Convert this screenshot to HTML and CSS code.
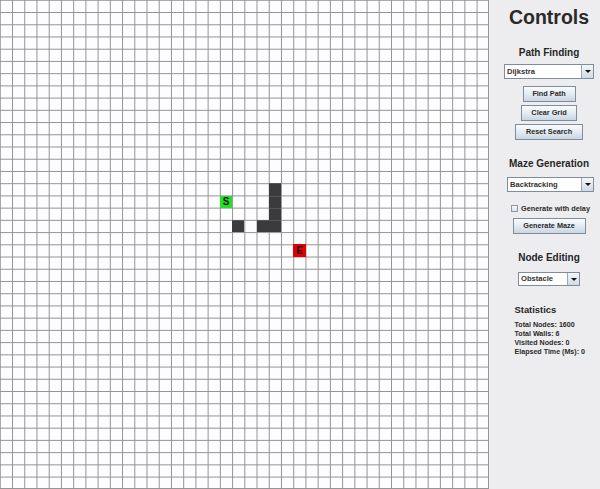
FILE: index.html
```html
<!DOCTYPE html>
<html>
<head>
<meta charset="utf-8">
<link rel="stylesheet" href="styles.css">
</head>
<body>
<div class="app">
  <div class="grid">
    <svg class="grid-lines" viewBox="0 0 800 800" preserveAspectRatio="none" xmlns="http://www.w3.org/2000/svg">
      <path class="lines" d="M0 .5H800M0 20.5H800M0 40.5H800M0 60.5H800M0 80.5H800M0 100.5H800M0 120.5H800M0 140.5H800M0 160.5H800M0 180.5H800M0 200.5H800M0 220.5H800M0 240.5H800M0 260.5H800M0 280.5H800M0 300.5H800M0 320.5H800M0 340.5H800M0 360.5H800M0 380.5H800M0 400.5H800M0 420.5H800M0 440.5H800M0 460.5H800M0 480.5H800M0 500.5H800M0 520.5H800M0 540.5H800M0 560.5H800M0 580.5H800M0 600.5H800M0 620.5H800M0 640.5H800M0 660.5H800M0 680.5H800M0 700.5H800M0 720.5H800M0 740.5H800M0 760.5H800M0 780.5H800M0 799.2H800M.5 0V800M20.5 0V800M40.5 0V800M60.5 0V800M80.5 0V800M100.5 0V800M120.5 0V800M140.5 0V800M160.5 0V800M180.5 0V800M200.5 0V800M220.5 0V800M240.5 0V800M260.5 0V800M280.5 0V800M300.5 0V800M320.5 0V800M340.5 0V800M360.5 0V800M380.5 0V800M400.5 0V800M420.5 0V800M440.5 0V800M460.5 0V800M480.5 0V800M500.5 0V800M520.5 0V800M540.5 0V800M560.5 0V800M580.5 0V800M600.5 0V800M620.5 0V800M640.5 0V800M660.5 0V800M680.5 0V800M700.5 0V800M720.5 0V800M740.5 0V800M760.5 0V800M780.5 0V800M799.2 0V800"/>
    </svg>
    <div class="cell start" style="grid-area: 17 / 19">S</div>
    <div class="cell end" style="grid-area: 21 / 25">E</div>
    <div class="cell wall" style="grid-area: 16 / 23"></div>
    <div class="cell wall" style="grid-area: 17 / 23"></div>
    <div class="cell wall" style="grid-area: 18 / 23"></div>
    <div class="cell wall" style="grid-area: 19 / 23"></div>
    <div class="cell wall" style="grid-area: 19 / 20"></div>
    <div class="cell wall" style="grid-area: 19 / 22"></div>
  </div>
  <div class="panel">
    <div class="title">Controls</div>

    <div class="section section-path">Path Finding</div>
    <div class="combo combo-algo"><span class="combo-text">Dijkstra</span><span class="combo-arrow"></span></div>
    <button class="btn btn-find">Find Path</button>
    <button class="btn btn-clear">Clear Grid</button>
    <button class="btn btn-reset">Reset Search</button>

    <div class="section section-maze">Maze Generation</div>
    <div class="combo combo-maze"><span class="combo-text">Backtracking</span><span class="combo-arrow"></span></div>
    <label class="check"><span class="check-box"></span><span class="check-label">Generate with delay</span></label>
    <button class="btn btn-gen">Generate Maze</button>

    <div class="section section-node">Node Editing</div>
    <div class="combo combo-node"><span class="combo-text">Obstacle</span><span class="combo-arrow"></span></div>

    <div class="stats">
      <div class="stats-title">Statistics</div>
      <div class="stat">Total Nodes: 1600</div>
      <div class="stat">Total Walls: 6</div>
      <div class="stat">Visited Nodes: 0</div>
      <div class="stat">Elapsed Time (Ms): 0</div>
    </div>
  </div>
</div>
</body>
</html>
```

FILE: styles.css
```css
html, body {
  margin: 0;
  padding: 0;
  width: 600px;
  height: 489px;
  overflow: hidden;
  background: #ededef;
  font-family: "Liberation Sans", Arial, sans-serif;
}

.app {
  display: flex;
  width: 600px;
  height: 489px;
}

.grid {
  flex: none;
  width: 489px;
  height: 489px;
  display: grid;
  grid-template-columns: repeat(40, 1fr);
  grid-template-rows: repeat(40, 1fr);
  background-color: #fdfcff;
}

.grid-lines {
  grid-area: 1 / 1 / -1 / -1;
  display: block;
  width: 489px;
  height: 489px;
}

.lines {
  fill: none;
  stroke: #929294;
  stroke-width: 1.6;
}

.cell {
  display: flex;
  align-items: center;
  justify-content: center;
  font-weight: bold;
  font-size: 10px;
  line-height: 1;
  color: #111;
}

.wall {
  background: #3b3b3d;
  box-shadow: inset 0 1px 0 #555;
}

.start {
  background: #22e022;
}

.end {
  background: #e00000;
  color: #1a0000;
}

.panel {
  flex: 1;
  display: flex;
  flex-direction: column;
  align-items: center;
  padding-left: 9px;
  color: #222;
}

.title {
  margin-top: 7px;
  height: 20px;
  line-height: 20px;
  font-size: 19.5px;
  font-weight: bold;
  color: #2a2a2a;
}

.section {
  height: 12px;
  line-height: 12px;
  font-size: 10px;
  font-weight: bold;
  color: #262626;
}

.section-path { margin-top: 20px; }
.section-maze { margin-top: 17.5px; }
.section-node { margin-top: 17.5px; }

.combo {
  box-sizing: border-box;
  display: flex;
  align-items: stretch;
  height: 15px;
  background: #fff;
  border: 1px solid #7f8d9b;
}

.combo-text {
  flex: 1;
  padding-left: 2px;
  font-size: 7.6px;
  font-weight: bold;
  line-height: 13px;
  color: #333;
}

.combo-arrow {
  position: relative;
  width: 11px;
  border-left: 1px solid #9aa8b6;
  background: linear-gradient(#f4f7fa, #cfdae5);
}

.combo-arrow::after {
  content: "";
  position: absolute;
  left: 2.5px;
  top: 5px;
  border-left: 3px solid transparent;
  border-right: 3px solid transparent;
  border-top: 3.5px solid #111;
}

.combo-algo { width: 90px; margin-top: 5px; }
.combo-maze { width: 87px; margin-top: 7.5px; margin-left: 3px; }
.combo-node { width: 62px; margin-top: 8.5px; height: 14px; }
.combo-node .combo-text { line-height: 12px; }
.combo-node .combo-arrow::after { top: 4.5px; }

.btn {
  box-sizing: border-box;
  height: 16px;
  padding: 0;
  margin: 0;
  border: 1px solid #7f8e9c;
  border-radius: 0;
  background: linear-gradient(#fbfcfd, #e4ebf2 50%, #c9d6e3);
  font-family: "Liberation Sans", Arial, sans-serif;
  font-size: 7.3px;
  font-weight: bold;
  color: #2a2a2a;
  line-height: 14px;
}

.btn-find { width: 53px; margin-top: 7px; }
.btn-clear { width: 56px; margin-top: 3px; }
.btn-reset { width: 68px; margin-top: 3px; }
.btn-gen { width: 73px; margin-top: 5px; }

.check {
  display: flex;
  align-items: center;
  gap: 3px;
  height: 10px;
  margin-top: 11px;
  margin-left: 3px;
}

.check-box {
  box-sizing: border-box;
  width: 7px;
  height: 7px;
  border: 1px solid #8a97a5;
  background: linear-gradient(#f5f8fb, #d8e1ea);
}

.check-label {
  font-size: 7.3px;
  font-weight: bold;
  color: #2a2a2a;
}

.stats {
  margin-top: 17.5px;
  width: 70px;
  margin-left: 1px;
}

.stats-title {
  height: 12px;
  line-height: 12px;
  font-size: 9.4px;
  font-weight: bold;
  color: #262626;
  margin-bottom: 5px;
}

.stat {
  height: 9px;
  line-height: 9px;
  font-size: 7.1px;
  font-weight: bold;
  color: #2a2a2a;
  white-space: nowrap;
}
```
